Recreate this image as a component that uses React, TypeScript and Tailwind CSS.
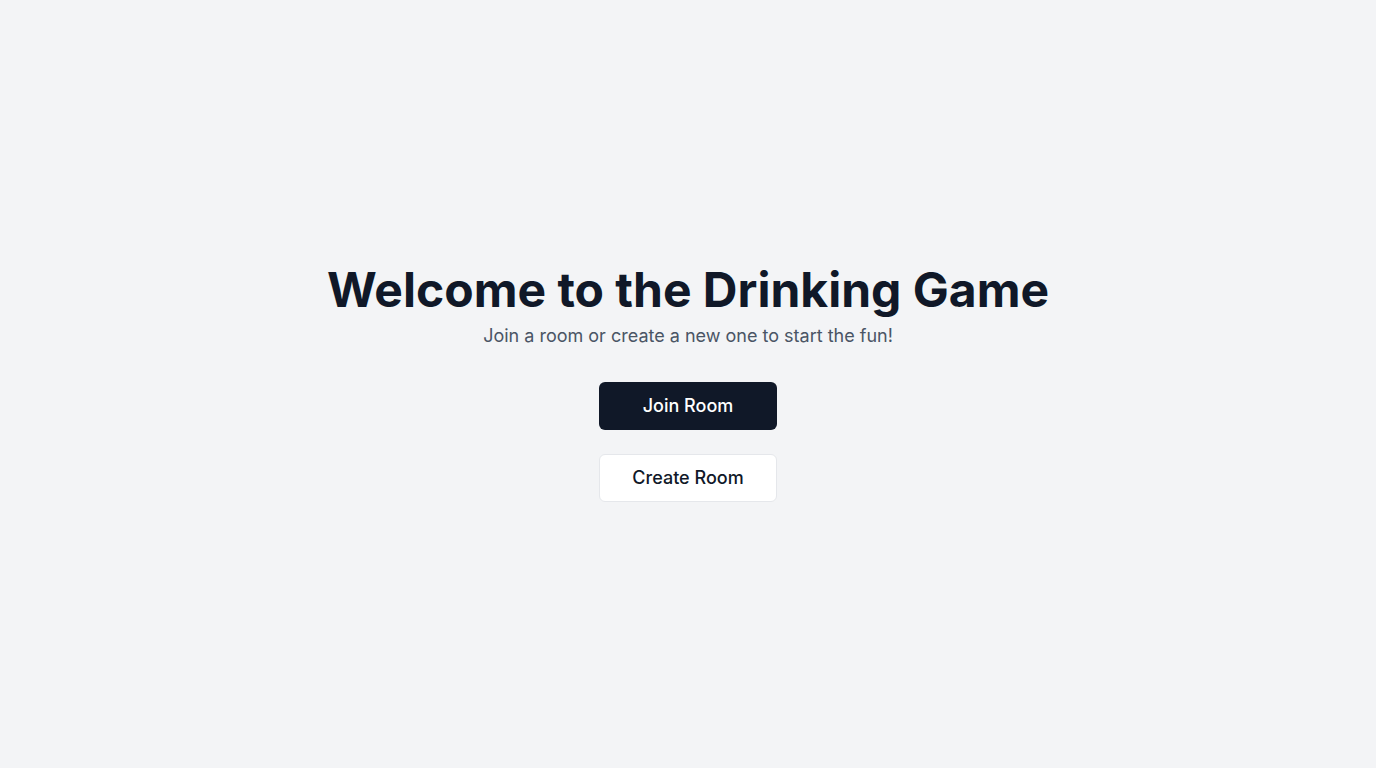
export default function App() {
  return (
    <div
      className="min-h-screen w-full bg-gray-100 flex flex-col items-center justify-center"
      style={{ fontFamily: "Inter, 'Noto Sans', sans-serif" }}
    >
      <h1 className="text-5xl font-bold text-gray-900 leading-none">Welcome to the Drinking Game</h1>
      <p className="mt-2 text-lg leading-7 text-gray-600">Join a room or create a new one to start the fun!</p>
      <div className="mt-8 flex flex-col gap-6">
        <button className="w-[178px] h-12 rounded-md bg-gray-900 text-white text-lg font-medium">Join Room</button>
        <button className="w-[178px] h-12 rounded-md bg-white border border-gray-200 text-gray-900 text-lg font-medium">Create Room</button>
      </div>
    </div>
  );
}
